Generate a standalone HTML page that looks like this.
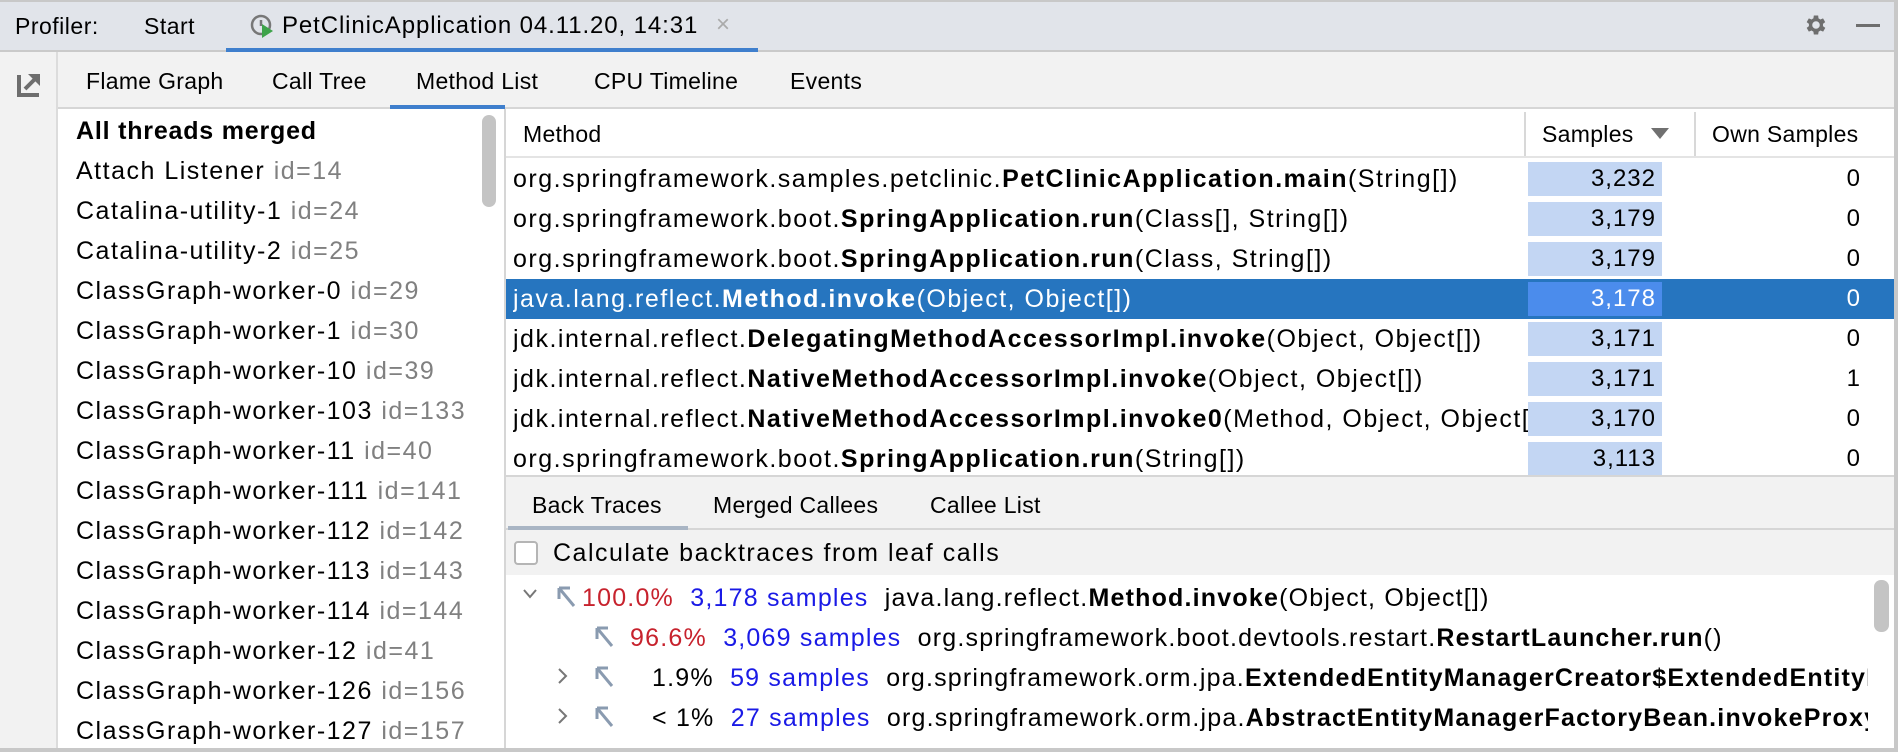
<!DOCTYPE html>
<html><head><meta charset="utf-8"><style>
*{margin:0;padding:0;box-sizing:border-box}
body{width:1898px;height:752px;overflow:hidden;background:#fff;font-family:"Liberation Sans",sans-serif;font-size:21px;color:#000;position:relative}
.a{position:absolute;white-space:nowrap}
.g{color:#808080}
.b{font-weight:bold}
.big{font-size:25px;letter-spacing:1.5px}
.tab{font-size:23px;letter-spacing:0.3px}
.row{position:absolute;left:506px;width:1388px;height:40px;line-height:40px;white-space:nowrap}
.row .m{position:absolute;left:7px;font-size:25px;letter-spacing:1.5px;overflow:hidden;max-width:1015px;white-space:nowrap}
.row .s{position:absolute;left:1022px;width:134px;top:3px;height:34px;line-height:34px;background:#c3d6f3;text-align:right;padding-right:6px;font-size:24px;letter-spacing:1px}
.row .o{position:absolute;right:34px;font-size:24px}
.th{position:absolute;left:76px;line-height:40px;font-size:25px;letter-spacing:1.5px;white-space:nowrap}
.tr{position:absolute;height:40px;line-height:40px;font-size:25px;letter-spacing:1.2px;white-space:nowrap}
.red{color:#c7222d}.blu{color:#1a1ae6}
</style></head><body>
<div class="a" style="left:0;top:0;width:1898px;height:52px;background:#e1e4ea;border-top:2px solid #c8c8c8;border-bottom:2px solid #cacaca"></div>
<div class="a" style="left:15px;top:11px;line-height:30px;font-size:23px;letter-spacing:0.5px">Profiler:</div>
<div class="a" style="left:144px;top:11px;line-height:30px;font-size:23px;letter-spacing:0.5px">Start</div>
<svg class="a" style="left:249px;top:12px" width="28" height="28" viewBox="0 0 28 28"><circle cx="12" cy="13" r="9" fill="none" stroke="#777" stroke-width="2.5"/><path d="M12 8v6" stroke="#777" stroke-width="2.5"/><path d="M13 12l11 7-11 7z" fill="#3ea34a"/></svg>
<div class="a" style="left:282px;top:11px;line-height:30px;font-size:24px;letter-spacing:0.9px">PetClinicApplication 04.11.20, 14:31</div>
<div class="a" style="left:716px;top:10px;line-height:30px;color:#aaa;font-size:24px">×</div>
<div class="a" style="left:226px;top:48px;width:532px;height:4px;background:#3f7fcd"></div>
<svg class="a" style="left:1803px;top:12px" width="26" height="26" viewBox="0 0 24 24"><path fill="#6e6e6e" d="M19.4 13a7.5 7.5 0 0 0 0-2l2.1-1.6-2-3.5-2.5 1a7.4 7.4 0 0 0-1.7-1L15 3.2h-4l-.4 2.7a7.4 7.4 0 0 0-1.7 1l-2.5-1-2 3.5L6.5 11a7.5 7.5 0 0 0 0 2l-2.1 1.6 2 3.5 2.5-1a7.4 7.4 0 0 0 1.7 1l.4 2.7h4l.4-2.7a7.4 7.4 0 0 0 1.7-1l2.5 1 2-3.5zM13 15.5a3.5 3.5 0 1 1 0-7 3.5 3.5 0 0 1 0 7z" transform="translate(-1 0)"/></svg>
<div class="a" style="left:1856px;top:24px;width:24px;height:3px;background:#6e6e6e"></div>
<div class="a" style="left:0;top:52px;width:58px;height:700px;background:#f2f2f2;border-right:2px solid #dcdcdc"></div>
<svg class="a" style="left:16px;top:70px" width="28" height="28" viewBox="0 0 28 28"><path d="M3 5v20h20" fill="none" stroke="#6e6e6e" stroke-width="4"/><path d="M9 19L22 6" stroke="#6e6e6e" stroke-width="4"/><path d="M12 4h12v12z" fill="#6e6e6e"/></svg>
<div class="a" style="left:58px;top:52px;width:1840px;height:57px;background:#f2f2f2;border-bottom:2px solid #d6d6d6"></div>
<div class="a tab" style="left:86px;top:67px;line-height:28px">Flame Graph</div>
<div class="a tab" style="left:272px;top:67px;line-height:28px">Call Tree</div>
<div class="a tab" style="left:416px;top:67px;line-height:28px">Method List</div>
<div class="a tab" style="left:594px;top:67px;line-height:28px">CPU Timeline</div>
<div class="a tab" style="left:790px;top:67px;line-height:28px">Events</div>
<div class="a" style="left:390px;top:105px;width:115px;height:4px;background:#3f7fcd"></div>
<div class="a" style="left:504px;top:109px;width:2px;height:643px;background:#d6d6d6"></div>
<div class="a" style="left:482px;top:115px;width:14px;height:92px;border-radius:7px;background:#c4c4c4"></div>
<div style="position:absolute;left:0;top:0;width:480px;height:752px;overflow:hidden">
<div class="th b" style="top:111px;letter-spacing:0.8px">All threads merged</div>
<div class="th" style="top:151px">Attach Listener <span class="g">id=14</span></div>
<div class="th" style="top:191px">Catalina-utility-1 <span class="g">id=24</span></div>
<div class="th" style="top:231px">Catalina-utility-2 <span class="g">id=25</span></div>
<div class="th" style="top:271px">ClassGraph-worker-0 <span class="g">id=29</span></div>
<div class="th" style="top:311px">ClassGraph-worker-1 <span class="g">id=30</span></div>
<div class="th" style="top:351px">ClassGraph-worker-10 <span class="g">id=39</span></div>
<div class="th" style="top:391px">ClassGraph-worker-103 <span class="g">id=133</span></div>
<div class="th" style="top:431px">ClassGraph-worker-11 <span class="g">id=40</span></div>
<div class="th" style="top:471px">ClassGraph-worker-111 <span class="g">id=141</span></div>
<div class="th" style="top:511px">ClassGraph-worker-112 <span class="g">id=142</span></div>
<div class="th" style="top:551px">ClassGraph-worker-113 <span class="g">id=143</span></div>
<div class="th" style="top:591px">ClassGraph-worker-114 <span class="g">id=144</span></div>
<div class="th" style="top:631px">ClassGraph-worker-12 <span class="g">id=41</span></div>
<div class="th" style="top:671px">ClassGraph-worker-126 <span class="g">id=156</span></div>
<div class="th" style="top:711px">ClassGraph-worker-127 <span class="g">id=157</span></div>
</div>
<div class="a" style="left:506px;top:109px;width:1388px;height:49px;border-bottom:2px solid #e4e4e4"></div>
<div class="a tab" style="left:523px;top:119px;line-height:30px">Method</div>
<div class="a" style="left:1524px;top:112px;width:2px;height:44px;background:#d8d8d8"></div>
<div class="a" style="left:1694px;top:112px;width:2px;height:44px;background:#d8d8d8"></div>
<div class="a tab" style="left:1542px;top:119px;line-height:30px">Samples</div>
<svg class="a" style="left:1651px;top:128px" width="20" height="12"><path d="M0 0h18L9 11z" fill="#707070"/></svg>
<div class="a tab" style="left:1712px;top:119px;line-height:30px">Own Samples</div>
<div class="row" style="top:159px"><span class="m">org.springframework.samples.petclinic.<b>PetClinicApplication.main</b>(String[])</span><span class="s">3,232</span><span class="o">0</span></div>
<div class="row" style="top:199px"><span class="m">org.springframework.boot.<b>SpringApplication.run</b>(Class[], String[])</span><span class="s">3,179</span><span class="o">0</span></div>
<div class="row" style="top:239px"><span class="m">org.springframework.boot.<b>SpringApplication.run</b>(Class, String[])</span><span class="s">3,179</span><span class="o">0</span></div>
<div class="row" style="top:279px;background:#2675bf;color:#fff"><span class="m">java.lang.reflect.<b>Method.invoke</b>(Object, Object[])</span><span class="s" style="background:#4b8cec">3,178</span><span class="o">0</span></div>
<div class="row" style="top:319px"><span class="m">jdk.internal.reflect.<b>DelegatingMethodAccessorImpl.invoke</b>(Object, Object[])</span><span class="s">3,171</span><span class="o">0</span></div>
<div class="row" style="top:359px"><span class="m">jdk.internal.reflect.<b>NativeMethodAccessorImpl.invoke</b>(Object, Object[])</span><span class="s">3,171</span><span class="o">1</span></div>
<div class="row" style="top:399px"><span class="m">jdk.internal.reflect.<b>NativeMethodAccessorImpl.invoke0</b>(Method, Object, Object[])</span><span class="s">3,170</span><span class="o">0</span></div>
<div class="row" style="top:439px"><span class="m">org.springframework.boot.<b>SpringApplication.run</b>(String[])</span><span class="s">3,113</span><span class="o">0</span></div>
<div class="a" style="left:506px;top:475px;width:1392px;height:100px;background:#f2f2f2;border-top:2px solid #d6d6d6"></div>
<div class="a" style="left:506px;top:528px;width:1388px;height:2px;background:#d6d6d6"></div>
<div class="a" style="left:508px;top:526px;width:180px;height:4px;background:#a9b5c4"></div>
<div class="a tab" style="left:532px;top:490px;line-height:30px">Back Traces</div>
<div class="a tab" style="left:713px;top:490px;line-height:30px">Merged Callees</div>
<div class="a tab" style="left:930px;top:490px;line-height:30px">Callee List</div>
<div class="a" style="left:514px;top:541px;width:24px;height:24px;border:2px solid #b5b5b5;border-radius:4px;background:#fff"></div>
<div class="a big" style="left:553px;top:538px;line-height:30px">Calculate backtraces from leaf calls</div>
<div class="a" style="left:1874px;top:580px;width:15px;height:52px;border-radius:7px;background:#c4c4c4"></div>
<div class="a" style="left:1894px;top:0;width:4px;height:752px;background:#c8c8c8"></div>
<div class="a" style="left:0;top:748px;width:1898px;height:4px;background:#c8c8c8"></div>
<div style="position:absolute;left:0;top:0;width:1868px;height:748px;overflow:hidden">
<svg class="a" style="left:522px;top:588px" width="16" height="12"><path d="M2 2l6 7 6-7" fill="none" stroke="#777" stroke-width="2"/></svg>
<svg class="a" style="left:556px;top:585px" width="22" height="24"><path d="M3 3v11M3 3h11M3 3l15 18" fill="none" stroke="#8a9bb0" stroke-width="3"/></svg>
<div class="tr" style="top:578px;left:582px"><span class="red">100.0%</span>&nbsp; <span class="blu">3,178 samples</span>&nbsp; java.lang.reflect.<b>Method.invoke</b>(Object, Object[])</div>
<svg class="a" style="left:594px;top:625px" width="22" height="24"><path d="M3 3v11M3 3h11M3 3l15 18" fill="none" stroke="#8a9bb0" stroke-width="3"/></svg>
<div class="tr" style="top:618px;left:630px"><span class="red">96.6%</span>&nbsp; <span class="blu">3,069 samples</span>&nbsp; org.springframework.boot.devtools.restart.<b>RestartLauncher.run</b>()</div>
<svg class="a" style="left:557px;top:667px" width="12" height="18"><path d="M2 2l7 7-7 7" fill="none" stroke="#777" stroke-width="2"/></svg>
<svg class="a" style="left:594px;top:665px" width="22" height="24"><path d="M3 3v11M3 3h11M3 3l15 18" fill="none" stroke="#8a9bb0" stroke-width="3"/></svg>
<div class="tr" style="top:658px;left:652px">1.9%&nbsp; <span class="blu">59 samples</span>&nbsp; org.springframework.orm.jpa.<b>ExtendedEntityManagerCreator$ExtendedEntityManagerInvocationHandler</b></div>
<svg class="a" style="left:557px;top:707px" width="12" height="18"><path d="M2 2l7 7-7 7" fill="none" stroke="#777" stroke-width="2"/></svg>
<svg class="a" style="left:594px;top:705px" width="22" height="24"><path d="M3 3v11M3 3h11M3 3l15 18" fill="none" stroke="#8a9bb0" stroke-width="3"/></svg>
<div class="tr" style="top:698px;left:652px">&lt; 1%&nbsp; <span class="blu">27 samples</span>&nbsp; org.springframework.orm.jpa.<b>AbstractEntityManagerFactoryBean.invokeProxyMethod</b></div>
</div>
</body></html>
